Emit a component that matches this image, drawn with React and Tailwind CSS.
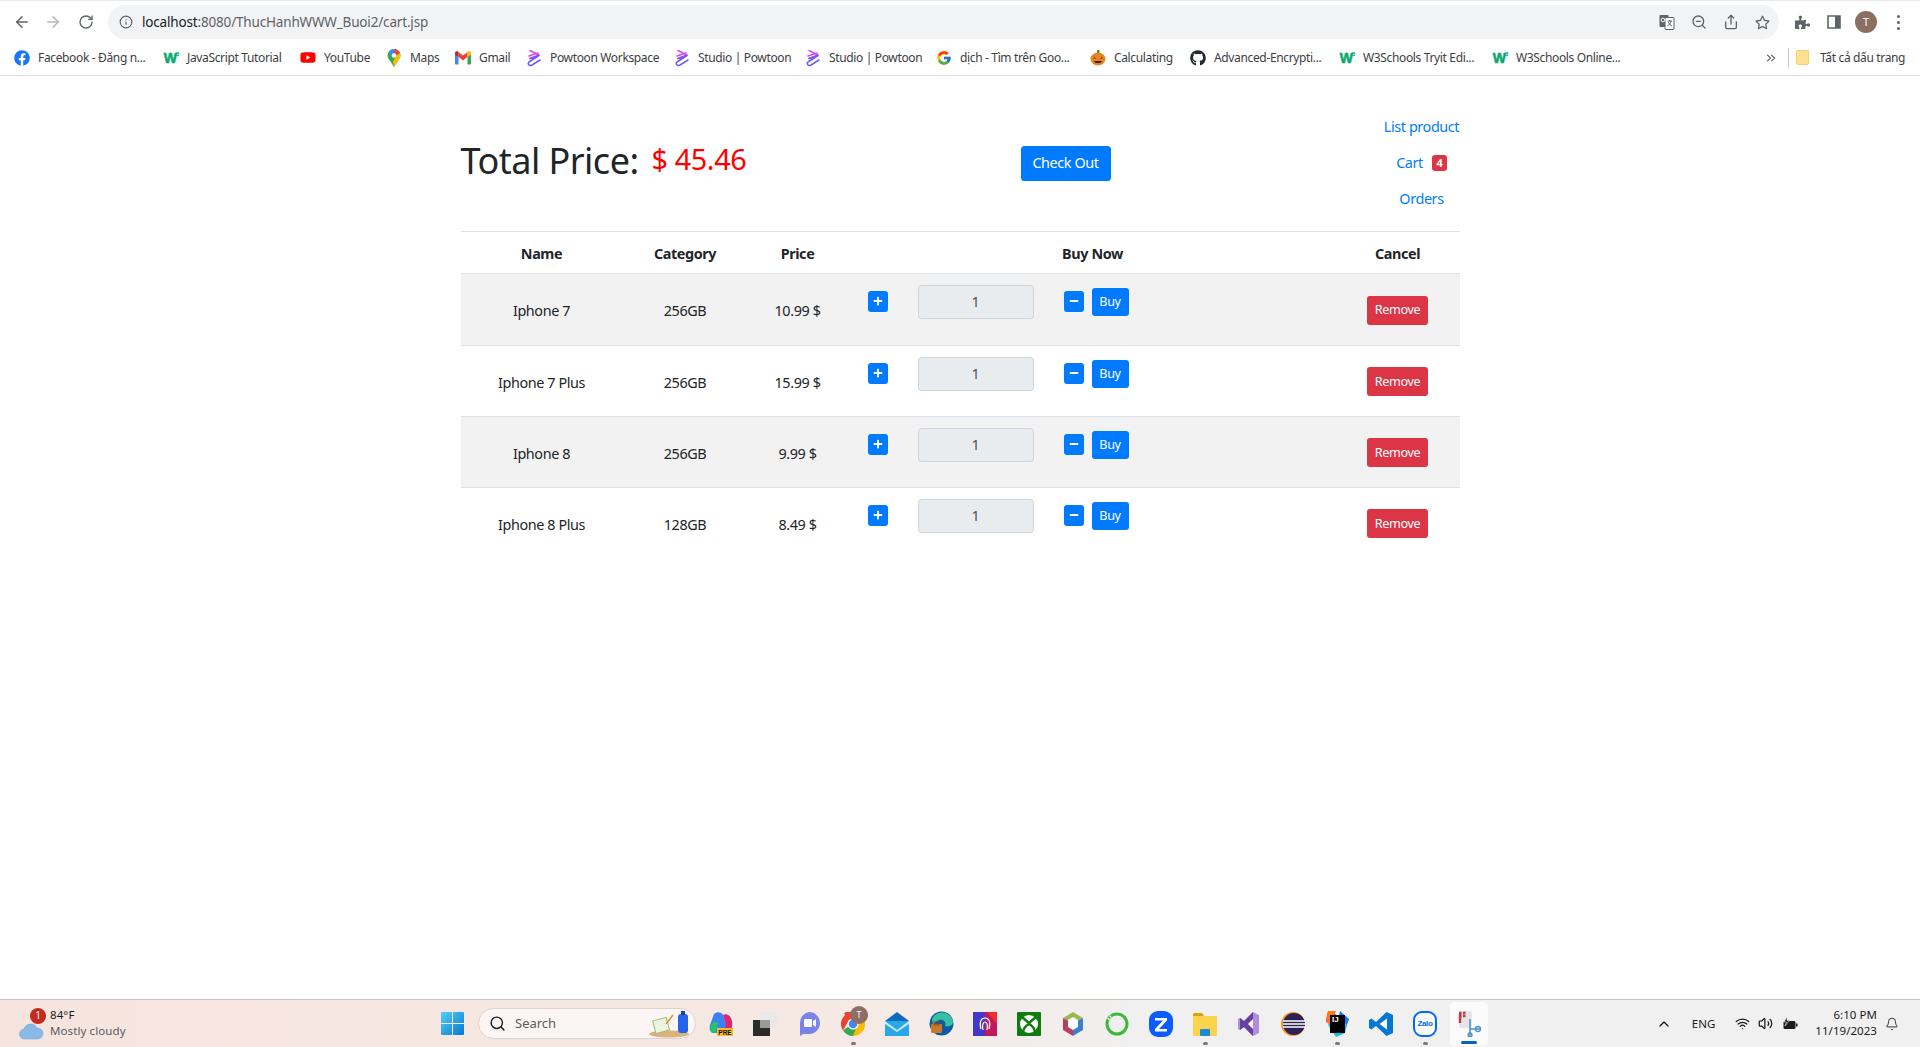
import React from 'react';
import { FaFacebook, FaYoutube, FaGithub, FaPlus, FaMinus, FaPuzzlePiece, FaRegStar } from 'react-icons/fa';
import { FcGoogle } from 'react-icons/fc';
import { ArrowLeft, ArrowRight, RotateCw, Info, ZoomOut, Share, Search, ChevronUp, ChevronsRight, Wifi, Volume2, Bell } from 'lucide-react';

const font = 'font-["Noto_Sans",sans-serif]';

const W3 = () => (
  <span className='w-4 h-4 flex items-start justify-center font-["Liberation_Sans"] font-black text-[14px] leading-4 text-[#04aa6d] tracking-[-1px] [-webkit-text-stroke:0.6px_#04aa6d]'>W<span className="text-[6px] leading-[8px] text-[#04aa6d] [-webkit-text-stroke:0px]">3</span></span>
);

const Powtoon = () => (
  <svg width="16" height="18" viewBox="0 0 16 18" fill="none" strokeLinecap="round" strokeLinejoin="round" strokeWidth="1.500">
    <path d="M4 1.500l9 4.500-9 3.500M3 7l9-3" stroke="#d946ef" />
    <path d="M4 9.500l9-3-10 6.500c-1 1-1 2 0 3s2 .5 3 0l8-5" stroke="#6d5cf6" />
  </svg>
);

const MapsPin = () => (
  <svg width="14" height="18" viewBox="0 0 14 18">
    <path d="M7 0a6.5 6.5 0 0 1 6.5 6.5c0 1.200-.4 2.200-1 3.100L7 18 1.500 9.600A6 6 0 0 1 .5 6.500 6.500 6.500 0 0 1 7 0z" fill="#34a853" />
    <path d="M2 2.500A6.500 6.500 0 0 1 7 0l1 4-4.500 4z" fill="#4285f4" />
    <path d="M7 0a6.500 6.500 0 0 1 6 4L9 6z" fill="#ea4335" />
    <path d="M13 4a6 6 0 0 1-.5 5.600L7 18l-1-5 3-6z" fill="#fbbc04" />
    <circle cx="7" cy="6.500" r="2.300" fill="#fff" />
  </svg>
);

const Gmail = () => (
  <svg width="16" height="14" viewBox="0 0 16 14">
    <path d="M0 2v10.500c0 .6.400 1 1 1h2.500V6z" fill="#4285f4" />
    <path d="M16 2v10.500c0 .6-.4 1-1 1h-2.500V6z" fill="#34a853" />
    <path d="M3.500 6L8 9.500 12.500 6V1L8 4.500 3.500 1z" fill="#ea4335" />
    <path d="M0 2c0-1.500 1.800-2 3-1.400l.5.4v5L0 3.500z" fill="#c5221f" />
    <path d="M16 2c0-1.500-1.800-2-3-1.400l-.5.4v5L16 3.500z" fill="#fbbc04" />
  </svg>
);

const Pumpkin = () => (
  <svg width="16" height="16" viewBox="0 0 16 16">
    <rect x="7" y="0" width="2.500" height="4" rx="1" fill="#5d7a24" />
    <ellipse cx="8" cy="9" rx="7.500" ry="6.500" fill="#e8851c" />
    <path d="M4 7l2 1.500H3.500zM12 7l-2 1.500h2.500zM4 11h8l-1.500 2h-5z" fill="#40210a" />
  </svg>
);

const bookmarks = [
  { icon: <FaFacebook size={16} color="#1877f2" />, label: 'Facebook - Đăng n...', w: 'w-[109px]', gap: 'mr-[16px]' },
  { icon: <W3 />, label: 'JavaScript Tutorial', w: 'w-[96px]', gap: 'mr-[17px]' },
  { icon: <FaYoutube size={17} color="#ff0000" />, label: 'YouTube', w: 'w-[46px]', gap: 'mr-[16px]' },
  { icon: <MapsPin />, label: 'Maps', w: 'w-[29px]', gap: 'mr-[16px]' },
  { icon: <Gmail />, label: 'Gmail', w: 'w-[30px]', gap: 'mr-[17px]' },
  { icon: <Powtoon />, label: 'Powtoon Workspace', w: 'w-[108px]', gap: 'mr-[16px]' },
  { icon: <Powtoon />, label: 'Studio | Powtoon', w: 'w-[91px]', gap: 'mr-[16px]' },
  { icon: <Powtoon />, label: 'Studio | Powtoon', w: 'w-[91px]', gap: 'mr-[16px]' },
  { icon: <FcGoogle size={16} />, label: 'dịch - Tìm trên Goo...', w: 'w-[112px]', gap: 'mr-[18px]' },
  { icon: <Pumpkin />, label: 'Calculating', w: 'w-[58px]', gap: 'mr-[18px]' },
  { icon: <FaGithub size={16} color="#24292f" />, label: 'Advanced-Encrypti...', w: 'w-[108px]', gap: 'mr-[17px]' },
  { icon: <W3 />, label: 'W3Schools Tryit Edi...', w: 'w-[111px]', gap: 'mr-[18px]' },
  { icon: <W3 />, label: 'W3Schools Online...', w: 'w-[105px]', gap: 'mr-[16px]' },
];

const products = [
  { name: 'Iphone 7', category: '256GB', price: '10.99 $', row: 'h-[72px] bg-[#f2f2f2]' },
  { name: 'Iphone 7 Plus', category: '256GB', price: '15.99 $', row: 'h-[71px]' },
  { name: 'Iphone 8', category: '256GB', price: '9.99 $', row: 'h-[71px] bg-[#f2f2f2]' },
  { name: 'Iphone 8 Plus', category: '128GB', price: '8.49 $', row: 'h-[71px]' },
];

const Translate = () => (
  <svg width="16" height="16" viewBox="0 0 16 16">
    <rect x="0.500" y="1" width="9" height="12" rx="1" fill="#5f6368" />
    <rect x="6" y="3.500" width="9" height="12" rx="1" fill="#fff" stroke="#5f6368" />
    <path d="M8.500 7h4.500M10.500 6v1M12 7c-.5 2.500-2 4-3.500 5M9.500 8.500c.6 1.500 2 3 3.500 3.500" stroke="#5f6368" fill="none" />
    <circle cx="4" cy="6" r="1.800" fill="none" stroke="#fff" />
  </svg>
);

const SidePanel = () => (
  <svg width="16" height="16" viewBox="0 0 16 16">
    <path d="M2 2h12v12H2z" fill="#fff" stroke="#5f6368" strokeWidth="1.600" />
    <rect x="9" y="2" width="5" height="12" fill="#5f6368" />
  </svg>
);

const Toolbar = () => (
  <div className="h-[36px] flex items-center bg-white">
    <ArrowLeft size={18} strokeWidth={2} className="ml-[13px] text-[#5f6368]" />
    <ArrowRight size={18} strokeWidth={2} className="ml-[13px] text-[#b4b6b9]" />
    <RotateCw size={16} strokeWidth={2} className="ml-[16px] text-[#5f6368]" />
    <div className="ml-[14px] w-[1671px] h-[34px] rounded-full bg-[#f1f3f4] flex items-center">
      <Info size={14} className="ml-[11px] text-[#5f6368]" />
      <span className="ml-[9px] text-[13.500px] tracking-[-0.170px] text-[#5f6368]"><span className="text-[#202124]">localhost</span>:8080/ThucHanhWWW_Buoi2/cart.jsp</span>
      <div className="ml-auto mr-[9px] flex items-center gap-[16px]">
        <Translate />
        <ZoomOut size={16} className="text-[#5f6368]" />
        <Share size={16} className="text-[#5f6368]" />
        <FaRegStar size={15} className="text-[#5f6368]" />
      </div>
    </div>
    <FaPuzzlePiece size={15} className="ml-[16px] text-[#5f6368]" />
    <span className="ml-[16px]"><SidePanel /></span>
    <span className="ml-[13px] w-[22px] h-[22px] rounded-full bg-[#8d6e63] text-white text-[11px] flex items-center justify-center">T</span>
    <span className="ml-[20px] flex flex-col gap-[3px]">
      <span className="w-[3px] h-[3px] rounded-full bg-[#5f6368]" />
      <span className="w-[3px] h-[3px] rounded-full bg-[#5f6368]" />
      <span className="w-[3px] h-[3px] rounded-full bg-[#5f6368]" />
    </span>
  </div>
);

const BookmarksBar = () => (
  <div className="h-[36px] pl-[14px] flex items-center bg-white border-b border-[#dddfe1] text-[12px] tracking-[-0.350px] text-[#3c4043]">
    {bookmarks.map((b, i) => (
      <div key={i} className={`flex items-center shrink-0 ${b.gap}`}>
        <span className="w-4 h-4 flex items-center justify-center shrink-0">{b.icon}</span>
        <span className={`ml-[8px] whitespace-nowrap ${b.w}`}>{b.label}</span>
      </div>
    ))}
    <ChevronsRight size={14} className="ml-[127px] text-[#5f6368]" />
    <span className="ml-[10px] w-px h-[20px] bg-[#c8cacc]" />
    <svg className="ml-[7px]" width="13" height="16" viewBox="0 0 13 16">
      <path d="M.5 1.500a1 1 0 0 1 1-1h6l5 0v13a1 1 0 0 1-1 1h-10a1 1 0 0 1-1-1z" fill="#fde293" stroke="#f6d167" />
    </svg>
    <span className="ml-[11px] whitespace-nowrap">Tất cả dấu trang</span>
  </div>
);

const SquareBtn = ({ children, className }) => (
  <span className={`w-[20px] h-[21px] rounded-[3px] bg-[#007bff] text-white flex items-center justify-center shrink-0 ${className}`}>{children}</span>
);

const Header = () => (
  <div className="h-[156px] pt-[33px] flex items-start border-b border-[#dee2e6]">
    <div className="h-[108px] flex items-center w-[560px] -mt-[2px]">
      <h1 className="text-[36px] tracking-[-0.520px] text-[#212529] leading-none">Total Price:</h1>
      <h3 className="ml-[13px] text-[28.800px] tracking-[-0.400px] text-[#ff0000] leading-none -mt-[4px]">$ 45.46</h3>
    </div>
    <div className="h-[108px] flex items-center">
      <button className="w-[90px] h-[35px] rounded-[3.600px] bg-[#007bff] text-white text-[14.400px] tracking-[-0.400px]">Check Out</button>
    </div>
    <nav className="ml-auto w-[76px] flex flex-col items-center text-[14.400px] tracking-[-0.400px] text-[#007bff]">
      <a className="h-[36px] leading-[36px] whitespace-nowrap">List product</a>
      <a className="h-[36px] flex items-center gap-[9px]">Cart <span className="w-[15px] h-[16px] rounded-[3px] bg-[#dc3545] text-white text-[11px] font-bold flex items-center justify-center">4</span></a>
      <a className="h-[36px] leading-[36px]">Orders</a>
    </nav>
  </div>
);

const CartTable = () => (
  <table className="w-[999px] table-fixed border-collapse text-[14.400px] tracking-[-0.400px] text-[#212529]">
    <colgroup>
      <col className="w-[160px]" />
      <col className="w-[127px]" />
      <col className="w-[98px]" />
      <col className="w-[488px]" />
      <col className="w-[126px]" />
    </colgroup>
    <thead>
      <tr className="h-[41px] border-b border-[#dee2e6] font-bold">
        <th className="pl-[2px] pt-[4px]">Name</th>
        <th className="pl-[2px] pt-[4px]">Category</th>
        <th className="pl-[2px] pt-[4px]">Price</th>
        <th className="pl-[6px] pt-[4px]">Buy Now</th>
        <th className="pl-[2px] pt-[4px]">Cancel</th>
      </tr>
    </thead>
    <tbody>
      {products.map((p) => (
        <tr key={p.name} className={`border-b border-[#dee2e6] last:border-b-0 ${p.row}`}>
          <td className="text-center pt-[4px] pl-[2px]">{p.name}</td>
          <td className="text-center pt-[4px] pl-[2px]">{p.category}</td>
          <td className="text-center pt-[4px] pl-[2px]">{p.price}</td>
          <td className="align-top pt-[11px] pl-[22px]">
            <div className="flex items-start">
              <SquareBtn className="mt-[6px]"><FaPlus size={10} /></SquareBtn>
              <div className="ml-[30px] w-[116px] h-[34px] rounded-[3.600px] border border-[#ced4da] bg-[#e9ecef] text-[#495057] text-center leading-[32px]">1</div>
              <SquareBtn className="ml-[30px] mt-[6px]"><FaMinus size={10} /></SquareBtn>
              <button className="ml-[8px] mt-[3px] w-[37px] h-[28px] pt-[1px] rounded-[3px] bg-[#007bff] text-white text-[12.600px] tracking-[-0.300px]">Buy</button>
            </div>
          </td>
          <td className="text-center pt-[2px] pl-[2px]">
            <button className="w-[61px] h-[29px] pt-[1px] rounded-[3px] bg-[#dc3545] text-white text-[12.600px] tracking-[-0.350px]">Remove</button>
          </td>
        </tr>
      ))}
    </tbody>
  </table>
);

const Copilot = () => (
  <svg width="24" height="26" viewBox="0 0 24 26">
    <path d="M5 3c3-3 8-2 9 1l5 15c-1 3-4 3-6 3H5C1 22 0 18 1 14z" fill="#3b82f6" />
    <path d="M14 4c4-2 8 1 9 6 1 6-1 11-5 12-2 0-4 0-5 0l4-8z" fill="#db2777" />
    <path d="M2 14c2-4 5-3 7-2l-3 10H4c-3 0-3-5-2-8z" fill="#22c55e" />
    <rect x="8" y="17" width="16" height="8" fill="#fbbf24" />
    <text x="16" y="24" textAnchor="middle" fontSize="6.500" fontWeight="700" fontFamily="Liberation Sans" fill="#111">PRE</text>
  </svg>
);

const apps = [
  { el: <Copilot /> },
  { el: (
    <svg width="24" height="24" viewBox="0 0 24 24">
      <rect x="0" y="8" width="17" height="16" fill="#2b2b2b" />
      <rect x="7" y="0" width="17" height="16" fill="#e9e9e9" />
      <rect x="7" y="8" width="10" height="8" fill="#9a9a9a" />
    </svg>
  ) },
  { el: (
    <svg width="24" height="26" viewBox="0 0 24 26">
      <path d="M12 1a11 11 0 0 1 0 22H3v-11A11 11 0 0 1 12 1z" fill="#7b83eb" />
      <path d="M3 20v5l5-3z" fill="#7b83eb" />
      <rect x="7" y="8" width="8" height="8" rx="1" fill="#fff" />
      <path d="M16 10l3-2v8l-3-2z" fill="#fff" />
    </svg>
  ) },
  { dot: true, el: (
    <span className="relative block w-[24px] h-[24px]">
      <svg width="24" height="24" viewBox="0 0 24 24">
        <path d="M12 12L3 1.500A12 12 0 0 1 23.500 8H12z" fill="#ea4335" />
        <path d="M12 0a12 12 0 0 0-10 18.500L8 8z" fill="#ea4335" />
        <path d="M2 18.500A12 12 0 0 0 12 24l6-10H8z" fill="#34a853" />
        <path d="M12 24A12 12 0 0 0 23.500 8H12l4 6z" fill="#fbbc04" />
        <circle cx="12" cy="12" r="5.500" fill="#fff" />
        <circle cx="12" cy="12" r="4.300" fill="#4285f4" />
      </svg>
      <span className="absolute -top-[6px] left-[9px] w-[18px] h-[18px] rounded-full bg-[#8d6e63] text-white text-[9px] flex items-center justify-center">T</span>
    </span>
  ) },
  { el: (
    <svg width="24" height="24" viewBox="0 0 24 24">
      <path d="M12 0l12 9v15H0V9z" fill="#0f6cbd" />
      <rect x="0" y="9" width="24" height="15" fill="#28a8ea" />
      <path d="M0 9l12 9 12-9v3L12 20 0 12z" fill="#cfe8fb" />
    </svg>
  ) },
  { el: (
    <svg width="25" height="25" viewBox="0 0 25 25">
      <circle cx="12.500" cy="12.500" r="12" fill="#0c59a4" />
      <path d="M3 8a11 11 0 0 1 21 3c0 4-5 5-8 4 2-4-2-7-6-6-3 1-5 3-5 6-1-2-2-4-2-7z" fill="#35c1a2" />
      <rect x="2" y="13" width="11" height="9" rx="1" fill="#c97a2b" />
      <rect x="5" y="11" width="5" height="3" fill="none" stroke="#8a4f16" />
    </svg>
  ) },
  { el: (
    <svg width="24" height="24" viewBox="0 0 24 24">
      <rect width="24" height="24" fill="#4338ca" />
      <path d="M12 0h12v24H12z" fill="#c2185b" />
      <path d="M14 0h10v12z" fill="#ef2f2f" />
      <path d="M8 17c-2-7 0-11 4-11s6 4 4 11M10 18c-1-5 0-8 2-8s3 3 2 8" stroke="#fff" fill="none" strokeWidth="1.200" />
    </svg>
  ) },
  { el: (
    <svg width="24" height="24" viewBox="0 0 24 24">
      <rect width="24" height="24" rx="1" fill="#107c10" />
      <circle cx="12" cy="12" r="9" fill="#fff" />
      <path d="M5 5l7 6 7-6M6 20c1-5 4-7 6-8 2 1 5 3 6 8" stroke="#107c10" strokeWidth="2.500" fill="none" />
    </svg>
  ) },
  { el: (
    <svg width="22" height="26" viewBox="0 0 22 26">
      <path d="M11 1l10 6v12l-10 6L1 19V7z" fill="#fff" />
      <path d="M11 1l10 6-10 5L1 7z" fill="#9cb84c" />
      <path d="M1 7l10 5v13L1 19z" fill="#b83f5f" />
      <path d="M21 7l-10 5v13l10-6z" fill="#3f7fc8" />
      <path d="M11 6l5 3v7l-5 3-5-3V9z" fill="#fff" />
    </svg>
  ) },
  { el: (
    <svg width="24" height="26" viewBox="0 0 24 26">
      <circle cx="12" cy="13" r="10" fill="none" stroke="#3cb93c" strokeWidth="3" />
      <path d="M6 5a10 10 0 0 0-3 5" stroke="#fff" strokeWidth="2" strokeDasharray="1.500 1.500" fill="none" />
    </svg>
  ) },
  { el: (
    <svg width="24" height="26" viewBox="0 0 24 26">
      <rect x="0" y="0" width="24" height="26" rx="9" fill="#0b5cff" />
      <path d="M6 7h12v2.500L10 18h8v2.500H6V18l8-8.500H6z" fill="#fff" />
    </svg>
  ) },
  { dot: true, el: (
    <svg width="24" height="24" viewBox="0 0 24 24">
      <path d="M0 3a2 2 0 0 1 2-2h7l2 3v2H0z" fill="#e0a106" />
      <rect x="0" y="4" width="24" height="20" rx="1" fill="#fcd34d" />
      <rect x="7" y="17" width="10" height="7" rx="1" fill="#1b8ad3" />
    </svg>
  ) },
  { el: (
    <svg width="24" height="26" viewBox="0 0 24 26">
      <path d="M16 1l6 3v18l-6 3-9-9-4 3-2-1V8l2-1 4 3z" fill="#b18ce0" />
      <path d="M16 1L7 10 3 7v12l4-3 9 9z" fill="#68409e" />
      <path d="M16 8v10l-5-5z" fill="#fff" />
    </svg>
  ) },
  { el: (
    <svg width="24" height="24" viewBox="0 0 24 24">
      <circle cx="12" cy="12" r="12" fill="#f7941e" />
      <circle cx="13" cy="12" r="11" fill="#2c2255" />
      <path d="M2 9h22M2 12h22M2 15h22" stroke="#fff" strokeWidth="1.300" />
    </svg>
  ) },
  { dot: true, el: (
    <span className="relative block w-[24px] h-[26px]">
      <svg width="24" height="26" viewBox="0 0 24 26" className="absolute inset-0">
        <path d="M3 0l8 3-5 10-5-2z" fill="#fe315d" />
        <path d="M15 0l9 8-3 9-9-4z" fill="#087cfa" />
        <path d="M3 14l8 12 9-4 2-9-14-4z" fill="#07c3f2" />
        <path d="M3 0h8L4 14 1 8z" fill="#f97a12" />
      </svg>
      <span className='absolute left-[5px] top-[4px] w-[15px] h-[18px] bg-black text-white text-[8px] font-bold font-["Liberation_Sans"] leading-[10px] pl-[2px]'>IJ</span>
    </span>
  ) },
  { el: (
    <svg width="24" height="24" viewBox="0 0 24 24">
      <path d="M17.500 0L7 10 2.500 6.500 0 8v8l2.500 1.500L7 14l10.500 10 6.500-3V3z" fill="#0078d4" />
      <path d="M18 6.500L10.500 12l7.500 5.500z" fill="#fff" />
    </svg>
  ) },
  { dot: true, el: (
    <span className='relative w-[24px] h-[26px] rounded-[9px] bg-white border-2 border-[#0068ff] text-[#0068ff] text-[8px] font-bold font-["Liberation_Sans"] flex items-center justify-center tracking-[-0.300px]'>Zalo</span>
  ) },
];

const Snipping = () => (
  <div className="relative w-[38px] h-[44px] rounded-[4px] bg-[#fbfbfb] flex items-center justify-center ml-[3px]">
    <svg width="26" height="26" viewBox="0 0 26 26">
      <rect x="3" y="0" width="13" height="17" rx="2" fill="#e2e6ea" />
      <path d="M3 2h8M3 5h8" stroke="#d13438" strokeWidth="2.500" strokeDasharray="2.500 1.500" />
      <path d="M4 3v9" stroke="#d13438" strokeWidth="2.500" />
      <path d="M14 8v18M14 18h10" stroke="#4a90c8" strokeWidth="1.500" />
      <circle cx="22" cy="18" r="2.500" fill="none" stroke="#4a90c8" strokeWidth="1.300" />
      <circle cx="14" cy="24" r="2" fill="none" stroke="#4a90c8" strokeWidth="1.300" />
    </svg>
    <span className="absolute bottom-[2px] w-[16px] h-[3px] rounded-full bg-[#0067c0]" />
  </div>
);

const WinLogo = () => (
  <svg width="23" height="23" viewBox="0 0 23 23">
    <defs>
      <linearGradient id="win" x1="0" y1="0" x2="1" y2="1">
        <stop offset="0" stopColor="#4fd2f7" />
        <stop offset="1" stopColor="#0a76cf" />
      </linearGradient>
    </defs>
    <path d="M0 1a1 1 0 0 1 1-1h10v11H0zM12 0h10a1 1 0 0 1 1 1v10H12zM0 12h11v11H1a1 1 0 0 1-1-1zM12 12h11v10a1 1 0 0 1-1 1H12z" fill="url(#win)" />
  </svg>
);

const Battery = () => (
  <svg width="17" height="14" viewBox="0 0 17 14" className="ml-[9px]">
    <rect x="1.500" y="4" width="12" height="8" rx="1.500" fill="#1b1b1b" />
    <rect x="14" y="6.500" width="1.500" height="3" fill="#1b1b1b" />
    <path d="M5 0L2 5h2.500L3 9l4.500-5.500H5z" fill="#1b1b1b" stroke="#f0f0f0" strokeWidth="0.600" />
  </svg>
);

const Taskbar = () => (
  <div className={`h-[48px] flex items-center border-t border-[#c9c4c2] bg-gradient-to-r from-[#f6e4df] via-[#f6e8e2] via-40% to-[#f0f0f0] to-60% text-[#1b1b1b]`}>
    <div className="w-[441px] flex items-center pl-[19px] shrink-0">
      <span className="relative block w-[25px] h-[24px]">
        <svg width="25" height="18" viewBox="0 0 25 18" className="absolute top-[10px] left-0">
          <path d="M6 17a5 5 0 0 1-1-10 7 7 0 0 1 13-1 5.500 5.500 0 0 1 1 11z" fill="#8ab9e8" stroke="#6d9fd6" strokeWidth="0.500" />
        </svg>
        <span className="absolute -top-[4px] left-[11px] w-[16px] h-[16px] rounded-full bg-[#c42b1c] text-white text-[10px] flex items-center justify-center">1</span>
      </span>
      <div className="ml-[6px] flex flex-col text-[11.500px] leading-[16px] tracking-[0.100px] -mt-[1px]">
        <span>84°F</span>
        <span className="text-[#5c5c5c]">Mostly cloudy</span>
      </div>
    </div>
    <WinLogo />
    <div className="ml-[14px] w-[218px] h-[31px] rounded-full bg-[#fbf6f4] border border-[#dcd3d0] flex items-center shrink-0">
      <Search size={17} className="ml-[10px] text-[#1b1b1b]" />
      <span className="ml-[9px] text-[13px] text-[#5c5c5c]">Search</span>
      <svg className="ml-auto mr-[5px]" width="42" height="28" viewBox="0 0 42 28">
        <ellipse cx="21" cy="24" rx="20" ry="3.500" fill="#d9b27c" />
        <rect x="6" y="9" width="14" height="13" fill="#eef3df" stroke="#9cbc7a" transform="rotate(-15 13 15)" />
        <path d="M18 14l7-9" stroke="#e58b2e" strokeWidth="1.500" />
        <rect x="30" y="4" width="10" height="19" rx="3" fill="#2563eb" />
        <rect x="33" y="1" width="4" height="4" fill="#1e40af" />
      </svg>
    </div>
    <div className="ml-[3px] flex items-center shrink-0">
      {apps.map((a, i) => (
        <div key={i} className="relative w-[44px] h-[44px] flex items-center justify-center">
          {a.el}
          {a.dot && <span className="absolute bottom-[1px] w-[5px] h-[3px] rounded-full bg-[#7a7a7a]" />}
        </div>
      ))}
      <Snipping />
    </div>
    <div className="ml-auto flex items-center text-[#1b1b1b] shrink-0">
      <ChevronUp size={16} />
      <span className="ml-[20px] text-[11.500px] tracking-[0px]">ENG</span>
      <Wifi size={15} className="ml-[20px]" />
      <Volume2 size={15} className="ml-[8px]" />
      <Battery />
      <div className="ml-[16px] flex flex-col items-end text-[11.500px] leading-[16px] tracking-[0.050px] -mt-[1px]">
        <span>6:10 PM</span>
        <span>11/19/2023</span>
      </div>
      <Bell size={14} strokeWidth={1.500} className="ml-[8px] mr-[21px]" />
    </div>
  </div>
);

export default function App() {
  return (
    <div className={`h-[1047px] w-[1920px] overflow-hidden flex flex-col bg-white ${font}`}>
      <div className="h-[4px] bg-white border-t border-[#e8eaed]" />
      <Toolbar />
      <BookmarksBar />
      <main className="flex-1 min-h-0">
        <div className="w-[999px] mx-auto">
          <Header />
          <CartTable />
        </div>
      </main>
      <Taskbar />
    </div>
  );
}
